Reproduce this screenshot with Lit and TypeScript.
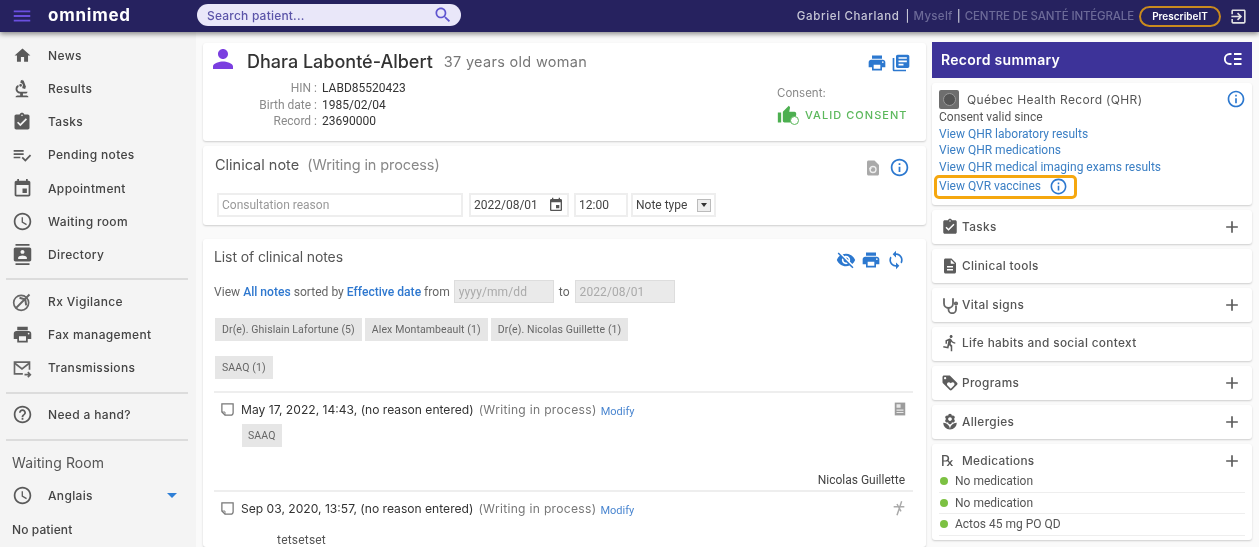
import { LitElement, html, css } from "lit";
import { customElement } from "lit/decorators.js";

const P: Record<string, string> = {
  home: "M10 20v-6h4v6h5v-8h3L12 3 2 12h3v8z",
  biotech: "M7 19c-1.1 0-2 .9-2 2h14c0-1.1-.9-2-2-2h-4v-2h3c1.1 0 2-.9 2-2h-8c-1.66 0-3-1.34-3-3 0-1.09.59-2.04 1.46-2.56C8.17 9.03 8 8.54 8 8c0-.21.04-.42.09-.62C6.28 8.02 5 9.84 5 12c0 2.76 2.24 5 5 5v2H7z M10.56 5.51C11.91 5.54 13 6.64 13 8c0 .75-.33 1.41-.85 1.87l.59 1.62.94-.34.34.94 1.88-.68-.34-.94.94-.34-2.74-7.52-.94.34-.34-.94-1.88.68.34.94-.94.35.56 1.53z M9 8a1.5 1.5 0 1 0 3 0a1.5 1.5 0 1 0-3 0z",
  task: "M19 3h-4.18C14.4 1.84 13.3 1 12 1c-1.3 0-2.4.84-2.82 2H5c-1.1 0-2 .9-2 2v14c0 1.1.9 2 2 2h14c1.1 0 2-.9 2-2V5c0-1.1-.9-2-2-2zm-7 0c.55 0 1 .45 1 1s-.45 1-1 1-1-.45-1-1 .45-1 1-1zm-2 14l-4-4 1.41-1.41L10 14.17l6.59-6.59L18 9l-8 8z",
  pending: "M14 10H2v2h12v-2zm0-4H2v2h12V6zM2 16h8v-2H2v2zm19.5-4.5L23 13l-6.99 7-4.51-4.5L13 14l3.01 3 5.49-5.5z",
  event: "M17 12h-5v5h5v-5zM16 1v2H8V1H6v2H5c-1.11 0-1.99.9-1.99 2L3 19c0 1.1.89 2 2 2h14c1.1 0 2-.9 2-2V5c0-1.1-.9-2-2-2h-1V1h-2zm3 18H5V8h14v11z",
  clock: "M11.99 2C6.47 2 2 6.48 2 12s4.47 10 9.99 10C17.52 22 22 17.52 22 12S17.52 2 11.99 2zM12 20c-4.42 0-8-3.58-8-8s3.58-8 8-8 8 3.58 8 8-3.58 8-8 8z M12.5 7H11v6l5.25 3.15.75-1.23-4.5-2.67z",
  contacts: "M20 0H4v2h16V0zM4 24h16v-2H4v2zM20 4H4c-1.1 0-2 .9-2 2v12c0 1.1.9 2 2 2h16c1.1 0 2-.9 2-2V6c0-1.1-.9-2-2-2zm-8 2.75c1.24 0 2.25 1.01 2.25 2.25s-1.01 2.25-2.25 2.25S9.75 10.24 9.75 9 10.76 6.75 12 6.75zM17 17H7v-1.5c0-1.67 3.33-2.5 5-2.5s5 .83 5 2.5V17z",
  print: "M19 8H5c-1.66 0-3 1.34-3 3v6h4v4h12v-4h4v-6c0-1.66-1.34-3-3-3zm-3 11H8v-5h8v5zm3-7c-.55 0-1-.45-1-1s.45-1 1-1 1 .45 1 1-.45 1-1 1zm-1-9H6v4h12V3z",
  help: "M11 18h2v-2h-2v2zm1-16C6.48 2 2 6.48 2 12s4.48 10 10 10 10-4.48 10-10S17.52 2 12 2zm0 18c-4.41 0-8-3.59-8-8s3.59-8 8-8 8 3.59 8 8-3.59 8-8 8zm0-14c-2.21 0-4 1.79-4 4h2c0-1.1.9-2 2-2s2 .9 2 2c0 2-3 1.75-3 5h2c0-2.25 3-2.5 3-5 0-2.21-1.79-4-4-4z",
  person: "M12 12c2.21 0 4-1.79 4-4s-1.79-4-4-4-4 1.79-4 4 1.79 4 4 4zm0 2c-2.67 0-8 1.34-8 4v2h16v-2c0-2.66-5.33-4-8-4z",
  search: "M15.5 14h-.79l-.28-.27C15.41 12.59 16 11.11 16 9.5 16 5.91 13.09 3 9.5 3S3 5.91 3 9.5 5.91 16 9.5 16c1.61 0 3.09-.59 4.23-1.57l.27.28v.79l5 4.99L20.49 19l-4.99-5zm-6 0C7.01 14 5 11.99 5 9.5S7.01 5 9.5 5 14 7.01 14 9.5 11.99 14 9.5 14z",
  library: "M4 6H2v14c0 1.1.9 2 2 2h14v-2H4V6zm16-4H8c-1.1 0-2 .9-2 2v12c0 1.1.9 2 2 2h12c1.1 0 2-.9 2-2V4c0-1.1-.9-2-2-2zm-1 9H9V9h10v2zm-4 4H9v-2h6v2zm4-8H9V5h10v2z",
  info: "M11 7h2v2h-2zm0 4h2v6h-2zm1-9C6.48 2 2 6.48 2 12s4.48 10 10 10 10-4.48 10-10S17.52 2 12 2zm0 18c-4.41 0-8-3.59-8-8s3.59-8 8-8 8 3.59 8 8-3.59 8-8 8z",
  eyeoff: "M12 7c2.76 0 5 2.24 5 5 0 .65-.13 1.26-.36 1.83l2.92 2.92c1.51-1.26 2.7-2.89 3.43-4.75-1.73-4.39-6-7.5-11-7.5-1.4 0-2.74.25-3.98.7l2.16 2.16C10.74 7.13 11.35 7 12 7zM2 4.27l2.28 2.28.46.46C3.08 8.3 1.78 10.02 1 12c1.73 4.39 6 7.5 11 7.5 1.55 0 3.03-.3 4.38-.84l.42.42L19.73 22 21 20.73 3.27 3 2 4.27zM7.53 9.8l1.55 1.55c-.05.21-.08.43-.08.65 0 1.66 1.34 3 3 3 .22 0 .44-.03.65-.08l1.55 1.55c-.67.33-1.41.53-2.2.53-2.76 0-5-2.24-5-5 0-.79.2-1.53.53-2.2zm4.31-.78l3.15 3.15.02-.16c0-1.66-1.34-3-3-3l-.17.01z",
  sync: "M12 4V1L8 5l4 4V6c3.31 0 6 2.69 6 6 0 1.01-.25 1.97-.7 2.8l1.46 1.46C19.54 15.03 20 13.57 20 12c0-4.42-3.58-8-8-8zm0 14c-3.31 0-6-2.69-6-6 0-1.01.25-1.97.7-2.8L5.24 7.74C4.46 8.97 4 10.43 4 12c0 4.42 3.58 8 8 8v3l4-4-4-4v3z",
  exit: "M10.09 15.59L11.5 17l5-5-5-5-1.41 1.41L12.67 11H3v2h9.67l-2.58 2.59zM19 3H5c-1.11 0-2 .9-2 2v4h2V5h14v14H5v-4H3v4c0 1.1.89 2 2 2h14c1.1 0 2-.9 2-2V5c0-1.1-.9-2-2-2z",
  menu: "M3 18h18v-2H3v2zm0-5h18v-2H3v2zm0-7v2h18V6H3z",
  add: "M19 13h-6v6h-2v-6H5v-2h6V5h2v6h6v2z",
  doc: "M14 2H6c-1.1 0-1.99.9-1.99 2L4 20c0 1.1.89 2 1.99 2H18c1.1 0 2-.9 2-2V8l-6-6zm2 16H8v-2h8v2zm0-4H8v-2h8v2zm-3-5V3.5L18.5 9H13z",
  run: "M13.49 5.48c1.1 0 2-.9 2-2s-.9-2-2-2-2 .9-2 2 .9 2 2 2zm-3.6 13.9l1-4.4 2.1 2v6h2v-7.5l-2.1-2 .6-3c1.3 1.5 3.3 2.5 5.5 2.5v-2c-1.9 0-3.5-1-4.3-2.4l-1-1.6c-.4-.6-1-1-1.7-1-.3 0-.5.1-.8.1l-5.2 2.2v4.7h2v-3.4l1.8-.7-1.6 8.1-4.9-1-.4 2 7 1.4z",
  tag: "M21.41 11.58l-9-9C12.05 2.22 11.55 2 11 2H4c-1.1 0-2 .9-2 2v7c0 .55.22 1.05.59 1.42l9 9c.36.36.86.58 1.41.58.55 0 1.05-.22 1.41-.59l7-7c.37-.36.59-.86.59-1.41 0-.55-.23-1.06-.59-1.42zM5.5 7C4.67 7 4 6.33 4 5.5S4.67 4 5.5 4 7 4.67 7 5.5 6.33 7 5.5 7zm11.77 8.27L13 19.54l-4.27-4.27C8.28 14.81 8 14.19 8 13.5c0-1.38 1.12-2.5 2.5-2.5.69 0 1.32.28 1.77.74l.73.72.73-.73c.45-.45 1.08-.73 1.77-.73 1.38 0 2.5 1.12 2.5 2.5 0 .69-.28 1.32-.73 1.77z",
  flower: "M12 22c4.97 0 9-4.03 9-9-4.97 0-9 4.03-9 9zM5.6 10.25c0 1.38 1.12 2.5 2.5 2.5.53 0 1.01-.16 1.42-.44l-.02.19c0 1.38 1.12 2.5 2.5 2.5s2.5-1.12 2.5-2.5l-.02-.19c.4.28.89.44 1.42.44 1.38 0 2.5-1.12 2.5-2.5 0-1-.59-1.85-1.43-2.25.84-.4 1.43-1.25 1.43-2.25 0-1.38-1.12-2.5-2.5-2.5-.53 0-1.01.16-1.42.44l.02-.19C14.5 2.12 13.38 1 12 1S9.5 2.12 9.5 3.5l.02.19c-.4-.28-.89-.44-1.42-.44-1.38 0-2.5 1.12-2.5 2.5 0 1 .59 1.85 1.43 2.25-.84.4-1.43 1.25-1.43 2.25zM12 5.5c1.38 0 2.5 1.12 2.5 2.5s-1.12 2.5-2.5 2.5S9.5 9.38 9.5 8s1.12-2.5 2.5-2.5zM3 13c0 4.97 4.03 9 9 9 0-4.97-4.03-9-9-9z",
  thumb: "M1 21h4V9H1v12zm22-11c0-1.1-.9-2-2-2h-6.31l.95-4.57.03-.32c0-.41-.17-.79-.44-1.06L14.17 1 7.59 7.59C7.22 7.95 7 8.45 7 9v10c0 1.1.9 2 2 2h9c.83 0 1.54-.5 1.84-1.22l3.02-7.05c.09-.23.14-.47.14-.73v-2z",
  calendar: "M17 12h-5v5h5v-5zM16 1v2H8V1H6v2H5c-1.11 0-1.99.9-1.99 2L3 19c0 1.1.89 2 2 2h14c1.1 0 2-.9 2-2V5c0-1.1-.9-2-2-2h-1V1h-2zm3 18H5V8h14v11z",
  restore: "M6 2h8l6 6v12c0 1.1-.9 2-2 2H6c-1.1 0-2-.9-2-2V4c0-1.1.9-2 2-2z",
};

const ic = (name: string, size: number, color: string) => html`<svg class="ic" width=${size} height=${size} viewBox="0 0 24 24" fill=${color}><path d=${P[name]}></path></svg>`;

const custom = {
  vigilance: html`<svg class="ic" width="20" height="20" viewBox="0 0 24 24" fill="none" stroke="#666" stroke-width="2"><circle cx="11" cy="13" r="9"></circle><path d="M5 19 18 6M18 6l3-3M9 7l7 2 1 7" stroke-width="2.4"></path></svg>`,
  mail: html`<svg class="ic" width="20" height="20" viewBox="0 0 24 24" fill="none" stroke="#666" stroke-width="2"><path d="M13 19H3V5h18v9"></path><path d="M3 6l9 7 9-7"></path><path d="M15 20h7M19 17l3 3-3 3"></path></svg>`,
  note: html`<svg class="ic" width="15" height="15" viewBox="0 0 24 24" fill="none" stroke="#777" stroke-width="2"><path d="M3 3h18v14a4 4 0 0 1-4 4H8l-5-5z"></path><path d="M3 16h5v5" stroke-width="1.4"></path></svg>`,
  stetho: html`<svg class="ic" width="18" height="18" viewBox="0 0 24 24" fill="none" stroke="#666" stroke-width="2.4"><path d="M4 3v7a6 6 0 0 0 12 0V3"></path><path d="M10 16v2a5 5 0 0 0 10 0v-5"></path><circle cx="20" cy="10" r="1.6"></circle></svg>`,
  collapse: html`<svg class="ic" width="20" height="20" viewBox="0 0 24 24" fill="none" stroke="#fff" stroke-width="2.2"><path d="M9 6H7a5 5 0 0 0 0 12h2"></path><path d="M12 6h9M12 12h9M12 18h9"></path></svg>`,
  qhr: html`<span class="qhr"><span class="qhr-in"></span></span>`,
  restore: html`<svg class="ic" width="18" height="20" viewBox="0 0 24 24"><path d=${P.restore} fill="#a9a9a9"></path><circle cx="12" cy="14" r="4" fill="none" stroke="#eee" stroke-width="1.8"></circle><path d="M6.5 12l2 3 2-3z" fill="#eee"></path></svg>`,
  docsm: html`<svg class="ic" width="14" height="16" viewBox="0 0 24 24"><path d="M3 1h18v22H3z" fill="#9c9c9c"></path><path d="M6 4h7v6H6zM6 13h12v2H6zM6 17h12v2H6z" fill="#e8e8e8"></path></svg>`,
  pin: html`<svg class="ic" width="16" height="16" viewBox="0 0 24 24" fill="none" stroke="#aaa" stroke-width="2.2"><path d="M9 23 16 2M4 10h16M9 6l6 11"></path></svg>`,
};

const navA: [string, string, number][] = [["home", "News", 19], ["biotech", "Results", 22], ["task", "Tasks", 20], ["pending", "Pending notes", 20], ["event", "Appointment", 21], ["clock", "Waiting room", 21], ["contacts", "Directory", 21]];

const sections: [unknown, string, boolean][] = [
  [ic("task", 18, "#5c5c5c"), "Tasks", true],
  [ic("doc", 18, "#5c5c5c"), "Clinical tools", false],
  [custom.stetho, "Vital signs", true],
  [ic("run", 18, "#5c5c5c"), "Life habits and social context", false],
  [ic("tag", 18, "#5c5c5c"), "Programs", true],
  [ic("flower", 18, "#5c5c5c"), "Allergies", true],
];

@customElement("app-root")
export class AppRoot extends LitElement {
  static styles = css`
    :host { display: block; width: 1259px; height: 547px; overflow: hidden; font-family: Roboto, sans-serif; font-size: 12px; color: #555; background: #fafafa; filter: blur(0.5px); }
    * { box-sizing: border-box; }
    .ic { display: block; flex: none; }
    a { color: #3b7fc4; text-decoration: none; }

    header { position: relative; z-index: 2; height: 32px; background: #26225f; box-shadow: 0 2px 5px rgba(0,0,0,.45); display: flex; align-items: center; padding: 0 11px; }
    .logo { font-family: Inter, sans-serif; font-weight: 700; font-size: 17px; letter-spacing: .75px; color: #fff; margin-left: 15px; width: 149px; padding-bottom: 3px; }
    .search { width: 264px; height: 22px; margin-top: -2px; border-radius: 11px; background: #e9e7f9; display: flex; align-items: center; justify-content: space-between; padding: 0 8px 0 10px; color: #5b54a8; font-family: Inter, sans-serif; font-size: 12px; letter-spacing: .2px; font-weight: 500; }
    .hright { margin-left: auto; display: flex; align-items: center; font-family: Inter, sans-serif; font-size: 11.5px; font-weight: 500; color: #6c6a98; white-space: nowrap; }
    .hright .u { color: #c6c6d6; font-weight: 500; letter-spacing: .65px; }
    .hright .m { letter-spacing: .3px; }
    .hright .c { letter-spacing: -.15px; }
    .hright .s { color: #c6c6d6; margin: 0 4px 0 6px; }
    .hright .s.s2 { margin: 0 4px; }
    .rxbtn { margin: 0 8px 0 5px; width: 82px; height: 21px; border: 2px solid #c98a1e; border-radius: 11px; color: #fff; font-size: 10px; font-weight: 600; display: flex; align-items: center; justify-content: center; }

    .body { display: flex; height: 515px; }
    nav { width: 196px; flex: none; background: #f4f4f4; padding-top: 7px; font-family: Inter, sans-serif; font-size: 12px; font-weight: 500; color: #444; letter-spacing: .35px; }
    .item { height: 33.15px; display: flex; align-items: center; padding-left: 12px; gap: 16px; }
    .item .i { width: 20px; display: flex; justify-content: center; }
    .hr { height: 2px; background: #dcdcdc; margin-left: 6px; width: 182px; }
    .mt7 { margin-top: 7px; }
    .mt8 { margin-top: 8px; }
    .sp5 { height: 5px; }
    .sp4 { height: 4px; }
    .wr { font-size: 14px; font-weight: 400; color: #555; letter-spacing: .1px; padding-left: 12px; margin-top: 12.5px; height: 20px; line-height: 20px; }
    .anglais { margin-top: 6px; position: relative; }
    .caret { position: absolute; left: 167px; top: 14px; width: 0; height: 0; border: 5px solid transparent; border-top: 5px solid #2f7fd6; border-bottom: 0; }
    .nop { padding-left: 12px; margin-top: 9.9px; line-height: 16px; letter-spacing: .1px; }

    main { width: 736px; flex: none; padding: 11px 6px 0 7px; background: #fafafa; display: flex; flex-direction: column; }
    .card { background: #fff; border-radius: 3px; box-shadow: 0 1px 2px rgba(0,0,0,.18); }

    .patient { height: 98px; display: flex; padding: 4px 15px 0 5px; flex: none; }
    .pl { display: flex; flex-direction: column; }
    .ptop { display: flex; align-items: center; height: 28px; }
    .ptop .ic { margin-top: -4px; }
    .name { font-family: Inter, sans-serif; font-size: 18px; color: #333; margin-left: 9px; font-weight: 500; letter-spacing: 0; }
    .age { font-family: Inter, sans-serif; font-size: 14.5px; color: #777; margin-left: 11px; letter-spacing: .3px; }
    .det { display: grid; grid-template-columns: 109px auto; column-gap: 5px; margin-top: 5px; line-height: 16.5px; color: #333; font-size: 12px; }
    .det .k { text-align: right; color: #8a8a8a; }
    .pr { margin-left: auto; display: flex; flex-direction: column; align-items: flex-end; }
    .tools { display: flex; gap: 4px; align-items: center; }
    .ptools { margin-top: 6px; }
    .consent { margin-top: 12px; width: 134px; font-family: Inter, sans-serif; font-size: 11.5px; color: #888; line-height: 16px; }
    .valid { display: flex; align-items: center; gap: 7px; margin-top: 4px; color: #5cb85c; font-weight: 500; letter-spacing: 1.05px; font-size: 11px; white-space: nowrap; }
    .thumb { position: relative; width: 21px; height: 20px; }
    .clk { position: absolute; right: -1px; bottom: 0; width: 9px; height: 9px; border-radius: 50%; background: #fff; border: 1.5px solid #5cb85c; }

    .note { margin-top: 5px; height: 79px; padding: 7px 16px 0 12px; flex: none; }
    .nrow { display: flex; align-items: center; height: 22px; justify-content: space-between; }
    .title { font-family: Inter, sans-serif; font-size: 14.5px; color: #555; letter-spacing: 0; }
    .title span { color: #888; margin-left: 4px; letter-spacing: -.1px; }
    .ntools { margin-top: 7px; gap: 7px; }
    .form { display: flex; margin-top: 18px; margin-left: 2px; }
    .inp { height: 24px; border: 2px solid #eee; background: #fff; display: flex; align-items: center; padding: 0 3px; font-size: 12px; color: #444; justify-content: space-between; white-space: nowrap; }
    .sel-b { width: 14px; height: 13px; border: 1px solid #bbb; background: #eee; display: flex; align-items: center; justify-content: center; }
    .sel-b i { width: 0; height: 0; border: 3px solid transparent; border-top: 4px solid #333; border-bottom: 0; }

    .list { margin-top: 14px; flex: 1; padding: 6px 13px 0 11px; }
    .ltitle { display: flex; align-items: center; justify-content: space-between; height: 22px; }
    .ltitle .title { color: #555; font-size: 14px; letter-spacing: -.1px; }
    .ltools { margin-right: 7px; gap: 5px; margin-top: 7px; }
    .filter { display: flex; align-items: center; margin-top: 13px; height: 23px; font-size: 12.1px; color: #666; white-space: pre; }
    .filter b { color: #2f78cf; font-weight: 500; }
    .dis { width: 100px; height: 23px; background: #eaeaea; border: 1px solid #ddd; color: #aaa; display: flex; align-items: center; padding: 0 4px; font-size: 12px; letter-spacing: .1px; }
    .to { margin: 0 5px; }
    .chips { display: flex; gap: 3px; height: 23px; margin-top: 15px; margin-left: 1px; }
    .chip { background: #e6e6e6; height: 23px; display: flex; align-items: center; padding: 0 7px; font-size: 10.5px; color: #666; letter-spacing: .1px; white-space: nowrap; }
    .sep { height: 2px; background: #eee; margin-top: 12px; }
    .nentry { display: flex; align-items: center; height: 22px; margin-top: 5px; padding-left: 6px; font-family: Inter, sans-serif; font-size: 12.1px; color: #333; position: relative; white-space: pre; }
    .nentry .t { margin-left: 6px; }
    .nentry .w { color: #777; margin-left: 5px; letter-spacing: .3px; }
    .nentry a { font-family: Roboto, sans-serif; font-size: 11px; color: #4a86d0; margin-left: 4px; margin-top: 4px; }
    .nentry .end { margin-left: auto; margin-right: 6px; }
    .chip.in { margin-left: 28px; margin-top: 4px; width: 40px; padding: 0 6px; }
    .sig { text-align: right; margin-top: 25px; padding-right: 8px; color: #444; line-height: 16px; height: 16px; font-size: 12px; }
    .sep.s2 { margin-top: 2px; }
    .tset { margin-left: 63px; margin-top: 14px; color: #555; letter-spacing: .2px; }

    aside { width: 327px; flex: none; padding-top: 10px; background: #fafafa; }
    aside > * { width: 320px; }
    .rh { height: 36px; background: #3d3399; color: #fff; display: flex; align-items: center; justify-content: space-between; padding: 0 8px 2px 9px; font-family: Inter, sans-serif; font-weight: 600; font-size: 14px; letter-spacing: .3px; }
    .qcard { margin-top: 5px; height: 122px; padding: 5px 7px 0 7px; position: relative; }
    .qtop { display: flex; align-items: center; height: 22px; font-family: Inter, sans-serif; font-size: 12px; color: #555; letter-spacing: .35px; }
    .qtop .t { margin-left: 8px; }
    .qtop .ic:last-child { margin-left: auto; margin-right: -1px; }
    .qhr { width: 20px; height: 19px; border-radius: 2px; background: #6e6e6e; display: flex; align-items: center; justify-content: center; flex: none; }
    .qhr-in { width: 13px; height: 13px; border-radius: 50%; background: #555; border: 1px solid #999; }
    .ql { line-height: 16.7px; margin-top: -1px; }
    .ql a, .ql div { display: block; }
    .ql .hl { display: flex; align-items: center; gap: 8px; width: 143px; height: 24px; margin: -1px 0 0 -5px; padding: 0 0 0 2px; border: 3px solid #f5a70f; border-radius: 5px; }
    .sec { margin-top: 5px; height: 34px; display: flex; align-items: center; padding: 0 10px 0 9px; font-family: Inter, sans-serif; font-size: 11.8px; font-weight: 500; color: #555; letter-spacing: .35px; }
    .sec .lbl { margin-left: 3px; }
    .sec.up { padding-bottom: 2px; }
    .sec .add { margin-left: auto; }
    .med { margin-top: 5px; height: 96px; padding: 6px 7px 0 7px; }
    .mth { display: flex; align-items: center; height: 21px; gap: 9px; font-family: Inter, sans-serif; font-size: 11.8px; font-weight: 500; color: #555; letter-spacing: .3px; }
    .rx { font-family: "DejaVu Sans", sans-serif; font-size: 15px; width: 14px; padding-left: 2px; color: #555; }
    .mth .add { margin-left: auto; margin-right: 3px; }
    .mr { height: 21.5px; display: flex; align-items: center; gap: 7px; border-bottom: 1px solid #eee; font-size: 12px; color: #555; }
    .dot { width: 8px; height: 8px; border-radius: 50%; background: #7cc142; margin-left: 1px; }
  `;

  render() {
    const navItem = (icon: unknown, label: string) => html`<div class="item"><span class="i">${icon}</span><span>${label}</span></div>`;
    return html`
      <header>
        ${ic("menu", 22, "#6a4fe0")}
        <div class="logo">omnimed</div>
        <div class="search"><span>Search patient...</span>${ic("search", 20, "#5f55d0")}</div>
        <div class="hright">
          <span class="u">Gabriel Charland</span><span class="s">|</span><span class="m">Myself</span><span class="s s2">|</span><span class="c">CENTRE DE SANTÉ INTÉGRALE</span>
          <span class="rxbtn">PrescribeIT</span>
          ${ic("exit", 19, "#e2e2e2")}
        </div>
      </header>
      <div class="body">
        <nav>
          ${navA.map(([i, l, s]) => navItem(ic(i, s, "#5a5a5a"), l))}
          <div class="hr mt7"></div>
          <div class="sp5"></div>
          ${navItem(custom.vigilance, "Rx Vigilance")}
          ${navItem(ic("print", 21, "#5a5a5a"), "Fax management")}
          ${navItem(custom.mail, "Transmissions")}
          <div class="hr mt8"></div>
          <div class="sp4"></div>
          ${navItem(ic("help", 21, "#5a5a5a"), "Need a hand?")}
          <div class="hr mt7"></div>
          <div class="wr">Waiting Room</div>
          <div class="item anglais">
            <span class="i">${ic("clock", 21, "#5a5a5a")}</span><span>Anglais</span><span class="caret"></span>
          </div>
          <div class="nop">No patient</div>
        </nav>
        <main>
          <section class="card patient">
            <div class="pl">
              <div class="ptop">
                ${ic("person", 30, "#7b3fe0")}
                <span class="name">Dhara Labonté-Albert</span><span class="age">37 years old woman</span>
              </div>
              <div class="det">
                <span class="k">HIN :</span><span>LABD85520423</span>
                <span class="k">Birth date :</span><span>1985/02/04</span>
                <span class="k">Record :</span><span>23690000</span>
              </div>
            </div>
            <div class="pr">
              <div class="tools ptools">${ic("print", 20, "#2c78cf")}${ic("library", 20, "#2c78cf")}</div>
              <div class="consent">Consent:
                <div class="valid"><span class="thumb">${ic("thumb", 20, "#4caf50")}<span class="clk"></span></span><span>VALID CONSENT</span></div>
              </div>
            </div>
          </section>

          <section class="card note">
            <div class="nrow">
              <div class="title">Clinical note <span>(Writing in process)</span></div>
              <div class="tools ntools">${custom.restore}${ic("info", 21, "#2c78cf")}</div>
            </div>
            <div class="form">
              <div class="inp" style="width:246px;color:#999">Consultation reason</div>
              <div class="inp" style="width:100px;margin-left:6px">2022/08/01 ${ic("calendar", 16, "#555")}</div>
              <div class="inp" style="width:54px;margin-left:5px">12:00</div>
              <div class="inp" style="width:85px;margin-left:3px">Note type <span class="sel-b"><i></i></span></div>
            </div>
          </section>

          <section class="card list">
            <div class="ltitle">
              <div class="title">List of clinical notes</div>
              <div class="tools ltools">${ic("eyeoff", 20, "#2c78cf")}${ic("print", 20, "#2c78cf")}${ic("sync", 20, "#2c78cf")}</div>
            </div>
            <div class="filter">View <b>All notes</b> sorted by <b>Effective date</b> from <span class="dis" style="margin-left:1px">yyyy/mm/dd</span><span class="to">to</span><span class="dis">2022/08/01</span></div>
            <div class="chips"><span class="chip">Dr(e). Ghislain Lafortune (5)</span><span class="chip">Alex Montambeault (1)</span><span class="chip">Dr(e). Nicolas Guillette (1)</span></div>
            <div class="chips"><span class="chip">SAAQ (1)</span></div>
            <div class="sep"></div>
            <div class="nentry">${custom.note}<span class="t">May 17, 2022, 14:43, (no reason entered)</span><span class="w">(Writing in process)</span><a>Modify</a><span class="end">${custom.docsm}</span></div>
            <span class="chip in">SAAQ</span>
            <div class="sig">Nicolas Guillette</div>
            <div class="sep s2"></div>
            <div class="nentry">${custom.note}<span class="t">Sep 03, 2020, 13:57, (no reason entered)</span><span class="w">(Writing in process)</span><a>Modify</a><span class="end">${custom.pin}</span></div>
            <div class="tset">tetsetset</div>
          </section>
        </main>
        <aside>
          <div class="rh"><span>Record summary</span>${custom.collapse}</div>
          <section class="card qcard">
            <div class="qtop">${custom.qhr}<span class="t">Québec Health Record (QHR)</span>${ic("info", 20, "#2c78cf")}</div>
            <div class="ql">
              <div>Consent valid since</div>
              <a>View QHR laboratory results</a>
              <a>View QHR medications</a>
              <a>View QHR medical imaging exams results</a>
              <div class="hl"><a>View QVR vaccines</a>${ic("info", 19, "#2c78cf")}</div>
            </div>
          </section>
          ${sections.map(([i, l, plus]) => html`<section class="card sec ${l.startsWith("Life") ? "up" : ""}">${i}<span class="lbl">${l}</span>${plus ? html`<span class="add">${ic("add", 20, "#5c5c5c")}</span>` : ""}</section>`)}
          <section class="card med">
            <div class="mth"><span class="rx">℞</span><span>Medications</span><span class="add">${ic("add", 20, "#5c5c5c")}</span></div>
            <div class="mr"><span class="dot"></span>No medication</div>
            <div class="mr"><span class="dot"></span>No medication</div>
            <div class="mr"><span class="dot"></span>Actos 45 mg PO QD</div>
          </section>
        </aside>
      </div>
    `;
  }
}
